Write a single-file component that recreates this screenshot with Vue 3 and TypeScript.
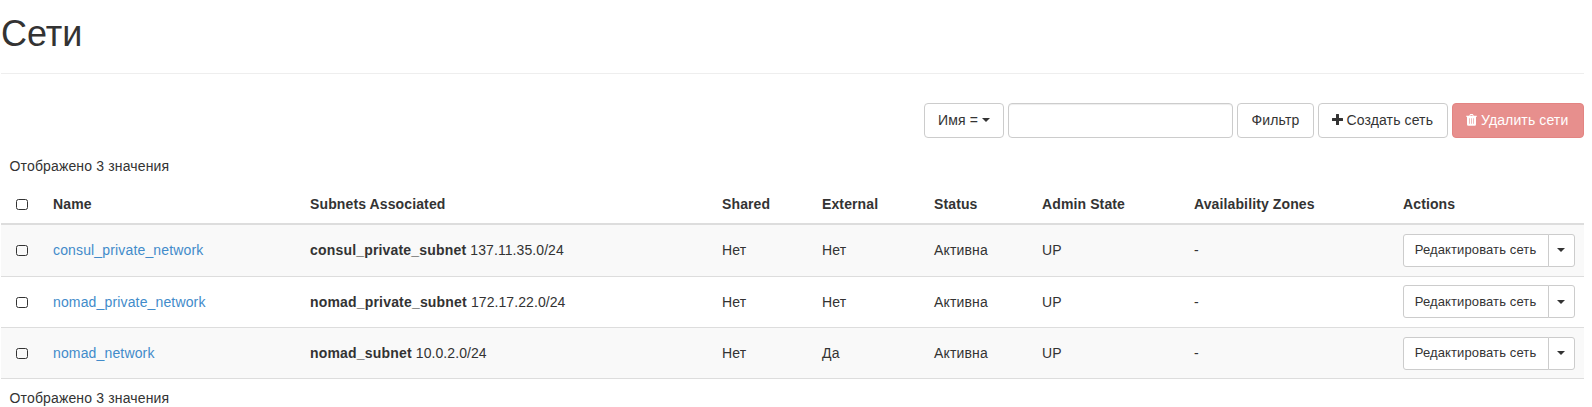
<script setup lang="ts">
interface Network {
  name: string
  subnet: string
  cidr: string
  shared: string
  external: string
  status: string
  admin: string
  zones: string
}

const columns: { key: string; label: string }[] = [
  { key: 'name', label: 'Name' },
  { key: 'subnets', label: 'Subnets Associated' },
  { key: 'shared', label: 'Shared' },
  { key: 'external', label: 'External' },
  { key: 'status', label: 'Status' },
  { key: 'admin', label: 'Admin State' },
  { key: 'zones', label: 'Availability Zones' },
  { key: 'actions', label: 'Actions' },
]

const networks: Network[] = [
  { name: 'consul_private_network', subnet: 'consul_private_subnet', cidr: '137.11.35.0/24', shared: 'Нет', external: 'Нет', status: 'Активна', admin: 'UP', zones: '-' },
  { name: 'nomad_private_network', subnet: 'nomad_private_subnet', cidr: '172.17.22.0/24', shared: 'Нет', external: 'Нет', status: 'Активна', admin: 'UP', zones: '-' },
  { name: 'nomad_network', subnet: 'nomad_subnet', cidr: '10.0.2.0/24', shared: 'Нет', external: 'Да', status: 'Активна', admin: 'UP', zones: '-' },
]
</script>

<template>
  <main class="page">
    <header class="page-header">
      <h1>Сети</h1>
    </header>

    <div class="toolbar">
      <button class="btn select-btn" type="button">Имя = <span class="caret"></span></button>
      <input class="search" type="text" />
      <button class="btn filter-btn" type="button">Фильтр</button>
      <button class="btn create-btn" type="button">
        <svg class="plus" viewBox="0 0 11 11"><path d="M4.500 0h2q.5 0 .5.5V4h3.500q.5 0 .5.5v2q0 .5-.5.5H7v3.500q0 .5-.5.5h-2q-.5 0-.5-.5V7H.5Q0 7 0 6.500v-2Q0 4 .5 4H4V.5q0-.5.5-.5z" /></svg>
        <span>Создать сеть</span>
      </button>
      <button class="btn delete-btn" type="button" disabled>
        <svg class="trash" viewBox="0 0 11 12">
          <path fill-rule="evenodd" d="M3.3 1.7 3.9.4Q4 .1 4.4.1h2.2q.4 0 .5.3l.6 1.300H10.600q.3 0 .3.3v.5q0 .3-.3.3H10v7.400q0 1.500-1.300 1.500H2.300Q1 11.700 1 10.200V2.800H.4Q.1 2.800.1 2.500V2q0-.3.3-.3zM4.300 1.700h2.400l-.3-.8H4.600zM3 4.200v5.500h.6V4.200zM5.200 4.200v5.500h.6V4.200zM7.400 4.200v5.500H8V4.200z" />
        </svg>
        <span>Удалить сети</span>
      </button>
    </div>

    <div class="count count-top">Отображено 3 значения</div>

    <table class="grid">
      <colgroup>
        <col class="c-check" />
        <col v-for="c in columns" :key="c.key" :class="'c-' + c.key" />
      </colgroup>
      <thead>
        <tr>
          <th><span class="box"></span></th>
          <th v-for="c in columns" :key="c.key">{{ c.label }}</th>
        </tr>
      </thead>
      <tbody>
        <tr v-for="n in networks" :key="n.name">
          <td class="check"><span class="box"></span></td>
          <td><a class="link">{{ n.name }}</a></td>
          <td><b>{{ n.subnet }}</b> <span class="cidr">{{ n.cidr }}</span></td>
          <td>{{ n.shared }}</td>
          <td>{{ n.external }}</td>
          <td>{{ n.status }}</td>
          <td>{{ n.admin }}</td>
          <td>{{ n.zones }}</td>
          <td class="actions">
            <div class="group">
              <button class="edit" type="button">Редактировать сеть</button>
              <button class="more" type="button"><span class="caret"></span></button>
            </div>
          </td>
        </tr>
      </tbody>
    </table>

    <div class="count count-bottom">Отображено 3 значения</div>
  </main>
</template>

<style>
body {
  margin: 0;
  background: #fff;
  overflow: hidden;
}
</style>

<style scoped>
.page {
  box-sizing: border-box;
  width: 1584px;
  height: 407px;
  padding-left: 1px;
  overflow: hidden;
  font: 14px/20px "Liberation Sans", Arial, sans-serif;
  letter-spacing: 0.15px;
  color: #333;
}
.page-header {
  box-sizing: border-box;
  height: 74px;
  padding-top: 14px;
  border-bottom: 1px solid #eee;
}
h1 {
  margin: 0;
  font-size: 36px;
  line-height: 40px;
  font-weight: 400;
  letter-spacing: 0;
}
button,
input {
  box-sizing: border-box;
  margin: 0;
  font: inherit;
  letter-spacing: 0.12px;
  color: inherit;
}
.toolbar {
  display: flex;
  justify-content: flex-end;
  gap: 4px;
  margin-top: 29px;
}
.btn {
  display: flex;
  align-items: center;
  justify-content: center;
  height: 35px;
  padding: 0 0 2px;
  border: 1px solid #ccc;
  border-radius: 4px;
  background: #fff;
  white-space: pre;
}
.caret {
  border-top: 4px solid #333;
  border-left: 4px solid transparent;
  border-right: 4px solid transparent;
}
.select-btn { width: 80px; }
.search {
  width: 225px;
  height: 35px;
  border: 1px solid #ccc;
  border-radius: 4px;
  background: #fff;
  box-shadow: inset 0 1px 1px rgba(0, 0, 0, 0.075);
}
.filter-btn { width: 77px; }
.create-btn {
  width: 130px;
  justify-content: flex-start;
  gap: 3.5px;
  padding-left: 13px;
}
.delete-btn {
  width: 132px;
  justify-content: flex-start;
  gap: 4px;
  padding-left: 13px;
  border-color: #e38482;
  background: #e78f8d;
  color: #fff;
}
.plus { width: 11px; height: 11px; fill: #333; }
.trash { width: 11px; height: 12px; fill: #fff; }
.count { padding-left: 8.5px; }
.count-top {
  margin-top: 18px;
  height: 29px;
}
.count-bottom { margin-top: 9px; }
.grid {
  width: 1583px;
  table-layout: fixed;
  border-collapse: separate;
  border-spacing: 0;
}
.c-check { width: 44px; }
.c-name { width: 257px; }
.c-subnets { width: 412px; }
.c-shared { width: 100px; }
.c-external { width: 112px; }
.c-status { width: 108px; }
.c-admin { width: 152px; }
.c-zones { width: 209px; }
.c-actions { width: 189px; }
th {
  box-sizing: border-box;
  height: 40px;
  padding: 0 8px;
  border-bottom: 2px solid #ddd;
  text-align: left;
  font-weight: 700;
  letter-spacing: 0.12px;
}
td {
  box-sizing: border-box;
  height: 51px;
  padding: 15px 8px 0;
  border-bottom: 1px solid #ddd;
  vertical-align: top;
}
td.check { padding-top: 20px; }
td.actions { padding-top: 9px; }
tbody tr:first-child td { height: 52px; }
tbody tr:nth-child(even) td.actions { padding-top: 8px; }
tbody tr:nth-child(odd) td { background: #f9f9f9; }
b { letter-spacing: 0.18px; }
.cidr { letter-spacing: 0.08px; }
.link { color: #428bca; }
.box {
  display: block;
  box-sizing: border-box;
  width: 12px;
  height: 11px;
  margin-left: 7px;
  border: 1px solid #333;
  border-radius: 2.5px;
}
th .box { margin-top: 1px; }
.group {
  display: flex;
  width: 172px;
  height: 33px;
}
.edit,
.more {
  display: flex;
  align-items: center;
  justify-content: center;
  padding: 0 1px 2px 0;
  border: 1px solid #ccc;
  background: #fff;
}
tbody tr:nth-child(even) .edit,
tbody tr:nth-child(even) .more { padding-bottom: 0; }
.edit {
  width: 146px;
  border-radius: 3px 0 0 3px;
  font-size: 13px;
}
.more {
  width: 27px;
  margin-left: -1px;
  border-radius: 0 3px 3px 0;
}
</style>
